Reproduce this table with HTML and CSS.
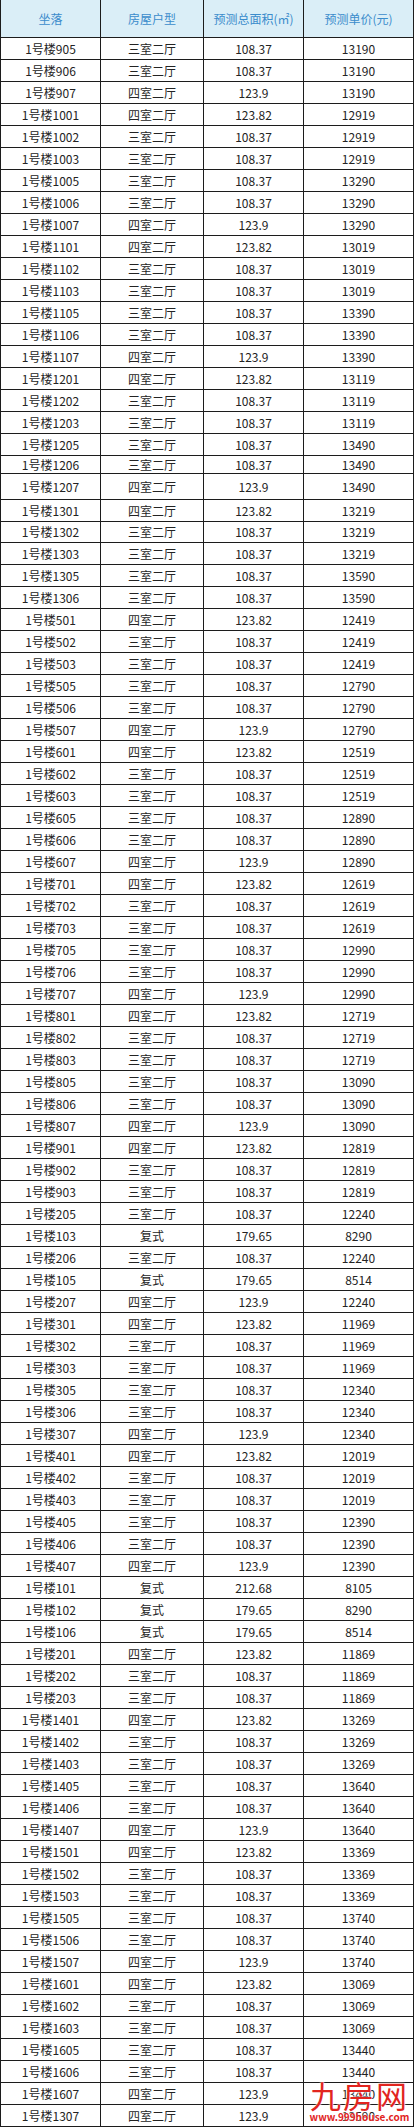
FILE: index.html
```html
<!DOCTYPE html>
<html lang="zh-CN">
<head>
<meta charset="utf-8">
<title>预测单价表</title>
<link rel="stylesheet" href="styles.css">
</head>
<body>
<div class="sheet">
  <div class="row head"><div class="cell c1">坐落</div><div class="cell c2">房屋户型</div><div class="cell c3">预测总面积(㎡)</div><div class="cell c4">预测单价(元)</div></div>
  <div class="row"><div class="cell c1">1号楼905</div><div class="cell c2">三室二厅</div><div class="cell c3">108.37</div><div class="cell c4">13190</div></div>
  <div class="row"><div class="cell c1">1号楼906</div><div class="cell c2">三室二厅</div><div class="cell c3">108.37</div><div class="cell c4">13190</div></div>
  <div class="row"><div class="cell c1">1号楼907</div><div class="cell c2">四室二厅</div><div class="cell c3">123.9</div><div class="cell c4">13190</div></div>
  <div class="row"><div class="cell c1">1号楼1001</div><div class="cell c2">四室二厅</div><div class="cell c3">123.82</div><div class="cell c4">12919</div></div>
  <div class="row"><div class="cell c1">1号楼1002</div><div class="cell c2">三室二厅</div><div class="cell c3">108.37</div><div class="cell c4">12919</div></div>
  <div class="row"><div class="cell c1">1号楼1003</div><div class="cell c2">三室二厅</div><div class="cell c3">108.37</div><div class="cell c4">12919</div></div>
  <div class="row"><div class="cell c1">1号楼1005</div><div class="cell c2">三室二厅</div><div class="cell c3">108.37</div><div class="cell c4">13290</div></div>
  <div class="row"><div class="cell c1">1号楼1006</div><div class="cell c2">三室二厅</div><div class="cell c3">108.37</div><div class="cell c4">13290</div></div>
  <div class="row"><div class="cell c1">1号楼1007</div><div class="cell c2">四室二厅</div><div class="cell c3">123.9</div><div class="cell c4">13290</div></div>
  <div class="row"><div class="cell c1">1号楼1101</div><div class="cell c2">四室二厅</div><div class="cell c3">123.82</div><div class="cell c4">13019</div></div>
  <div class="row"><div class="cell c1">1号楼1102</div><div class="cell c2">三室二厅</div><div class="cell c3">108.37</div><div class="cell c4">13019</div></div>
  <div class="row"><div class="cell c1">1号楼1103</div><div class="cell c2">三室二厅</div><div class="cell c3">108.37</div><div class="cell c4">13019</div></div>
  <div class="row"><div class="cell c1">1号楼1105</div><div class="cell c2">三室二厅</div><div class="cell c3">108.37</div><div class="cell c4">13390</div></div>
  <div class="row"><div class="cell c1">1号楼1106</div><div class="cell c2">三室二厅</div><div class="cell c3">108.37</div><div class="cell c4">13390</div></div>
  <div class="row"><div class="cell c1">1号楼1107</div><div class="cell c2">四室二厅</div><div class="cell c3">123.9</div><div class="cell c4">13390</div></div>
  <div class="row"><div class="cell c1">1号楼1201</div><div class="cell c2">四室二厅</div><div class="cell c3">123.82</div><div class="cell c4">13119</div></div>
  <div class="row"><div class="cell c1">1号楼1202</div><div class="cell c2">三室二厅</div><div class="cell c3">108.37</div><div class="cell c4">13119</div></div>
  <div class="row"><div class="cell c1">1号楼1203</div><div class="cell c2">三室二厅</div><div class="cell c3">108.37</div><div class="cell c4">13119</div></div>
  <div class="row"><div class="cell c1">1号楼1205</div><div class="cell c2">三室二厅</div><div class="cell c3">108.37</div><div class="cell c4">13490</div></div>
  <div class="row short"><div class="cell c1">1号楼1206</div><div class="cell c2">三室二厅</div><div class="cell c3">108.37</div><div class="cell c4">13490</div></div>
  <div class="row tall"><div class="cell c1">1号楼1207</div><div class="cell c2">四室二厅</div><div class="cell c3">123.9</div><div class="cell c4">13490</div></div>
  <div class="row"><div class="cell c1">1号楼1301</div><div class="cell c2">四室二厅</div><div class="cell c3">123.82</div><div class="cell c4">13219</div></div>
  <div class="row snug"><div class="cell c1">1号楼1302</div><div class="cell c2">三室二厅</div><div class="cell c3">108.37</div><div class="cell c4">13219</div></div>
  <div class="row"><div class="cell c1">1号楼1303</div><div class="cell c2">三室二厅</div><div class="cell c3">108.37</div><div class="cell c4">13219</div></div>
  <div class="row"><div class="cell c1">1号楼1305</div><div class="cell c2">三室二厅</div><div class="cell c3">108.37</div><div class="cell c4">13590</div></div>
  <div class="row"><div class="cell c1">1号楼1306</div><div class="cell c2">三室二厅</div><div class="cell c3">108.37</div><div class="cell c4">13590</div></div>
  <div class="row"><div class="cell c1">1号楼501</div><div class="cell c2">四室二厅</div><div class="cell c3">123.82</div><div class="cell c4">12419</div></div>
  <div class="row"><div class="cell c1">1号楼502</div><div class="cell c2">三室二厅</div><div class="cell c3">108.37</div><div class="cell c4">12419</div></div>
  <div class="row"><div class="cell c1">1号楼503</div><div class="cell c2">三室二厅</div><div class="cell c3">108.37</div><div class="cell c4">12419</div></div>
  <div class="row"><div class="cell c1">1号楼505</div><div class="cell c2">三室二厅</div><div class="cell c3">108.37</div><div class="cell c4">12790</div></div>
  <div class="row"><div class="cell c1">1号楼506</div><div class="cell c2">三室二厅</div><div class="cell c3">108.37</div><div class="cell c4">12790</div></div>
  <div class="row"><div class="cell c1">1号楼507</div><div class="cell c2">四室二厅</div><div class="cell c3">123.9</div><div class="cell c4">12790</div></div>
  <div class="row"><div class="cell c1">1号楼601</div><div class="cell c2">四室二厅</div><div class="cell c3">123.82</div><div class="cell c4">12519</div></div>
  <div class="row"><div class="cell c1">1号楼602</div><div class="cell c2">三室二厅</div><div class="cell c3">108.37</div><div class="cell c4">12519</div></div>
  <div class="row"><div class="cell c1">1号楼603</div><div class="cell c2">三室二厅</div><div class="cell c3">108.37</div><div class="cell c4">12519</div></div>
  <div class="row"><div class="cell c1">1号楼605</div><div class="cell c2">三室二厅</div><div class="cell c3">108.37</div><div class="cell c4">12890</div></div>
  <div class="row"><div class="cell c1">1号楼606</div><div class="cell c2">三室二厅</div><div class="cell c3">108.37</div><div class="cell c4">12890</div></div>
  <div class="row"><div class="cell c1">1号楼607</div><div class="cell c2">四室二厅</div><div class="cell c3">123.9</div><div class="cell c4">12890</div></div>
  <div class="row"><div class="cell c1">1号楼701</div><div class="cell c2">四室二厅</div><div class="cell c3">123.82</div><div class="cell c4">12619</div></div>
  <div class="row"><div class="cell c1">1号楼702</div><div class="cell c2">三室二厅</div><div class="cell c3">108.37</div><div class="cell c4">12619</div></div>
  <div class="row"><div class="cell c1">1号楼703</div><div class="cell c2">三室二厅</div><div class="cell c3">108.37</div><div class="cell c4">12619</div></div>
  <div class="row"><div class="cell c1">1号楼705</div><div class="cell c2">三室二厅</div><div class="cell c3">108.37</div><div class="cell c4">12990</div></div>
  <div class="row"><div class="cell c1">1号楼706</div><div class="cell c2">三室二厅</div><div class="cell c3">108.37</div><div class="cell c4">12990</div></div>
  <div class="row"><div class="cell c1">1号楼707</div><div class="cell c2">四室二厅</div><div class="cell c3">123.9</div><div class="cell c4">12990</div></div>
  <div class="row"><div class="cell c1">1号楼801</div><div class="cell c2">四室二厅</div><div class="cell c3">123.82</div><div class="cell c4">12719</div></div>
  <div class="row"><div class="cell c1">1号楼802</div><div class="cell c2">三室二厅</div><div class="cell c3">108.37</div><div class="cell c4">12719</div></div>
  <div class="row"><div class="cell c1">1号楼803</div><div class="cell c2">三室二厅</div><div class="cell c3">108.37</div><div class="cell c4">12719</div></div>
  <div class="row"><div class="cell c1">1号楼805</div><div class="cell c2">三室二厅</div><div class="cell c3">108.37</div><div class="cell c4">13090</div></div>
  <div class="row"><div class="cell c1">1号楼806</div><div class="cell c2">三室二厅</div><div class="cell c3">108.37</div><div class="cell c4">13090</div></div>
  <div class="row"><div class="cell c1">1号楼807</div><div class="cell c2">四室二厅</div><div class="cell c3">123.9</div><div class="cell c4">13090</div></div>
  <div class="row"><div class="cell c1">1号楼901</div><div class="cell c2">四室二厅</div><div class="cell c3">123.82</div><div class="cell c4">12819</div></div>
  <div class="row"><div class="cell c1">1号楼902</div><div class="cell c2">三室二厅</div><div class="cell c3">108.37</div><div class="cell c4">12819</div></div>
  <div class="row"><div class="cell c1">1号楼903</div><div class="cell c2">三室二厅</div><div class="cell c3">108.37</div><div class="cell c4">12819</div></div>
  <div class="row"><div class="cell c1">1号楼205</div><div class="cell c2">三室二厅</div><div class="cell c3">108.37</div><div class="cell c4">12240</div></div>
  <div class="row"><div class="cell c1">1号楼103</div><div class="cell c2">复式</div><div class="cell c3">179.65</div><div class="cell c4">8290</div></div>
  <div class="row"><div class="cell c1">1号楼206</div><div class="cell c2">三室二厅</div><div class="cell c3">108.37</div><div class="cell c4">12240</div></div>
  <div class="row"><div class="cell c1">1号楼105</div><div class="cell c2">复式</div><div class="cell c3">179.65</div><div class="cell c4">8514</div></div>
  <div class="row"><div class="cell c1">1号楼207</div><div class="cell c2">四室二厅</div><div class="cell c3">123.9</div><div class="cell c4">12240</div></div>
  <div class="row"><div class="cell c1">1号楼301</div><div class="cell c2">四室二厅</div><div class="cell c3">123.82</div><div class="cell c4">11969</div></div>
  <div class="row"><div class="cell c1">1号楼302</div><div class="cell c2">三室二厅</div><div class="cell c3">108.37</div><div class="cell c4">11969</div></div>
  <div class="row"><div class="cell c1">1号楼303</div><div class="cell c2">三室二厅</div><div class="cell c3">108.37</div><div class="cell c4">11969</div></div>
  <div class="row"><div class="cell c1">1号楼305</div><div class="cell c2">三室二厅</div><div class="cell c3">108.37</div><div class="cell c4">12340</div></div>
  <div class="row"><div class="cell c1">1号楼306</div><div class="cell c2">三室二厅</div><div class="cell c3">108.37</div><div class="cell c4">12340</div></div>
  <div class="row"><div class="cell c1">1号楼307</div><div class="cell c2">四室二厅</div><div class="cell c3">123.9</div><div class="cell c4">12340</div></div>
  <div class="row"><div class="cell c1">1号楼401</div><div class="cell c2">四室二厅</div><div class="cell c3">123.82</div><div class="cell c4">12019</div></div>
  <div class="row"><div class="cell c1">1号楼402</div><div class="cell c2">三室二厅</div><div class="cell c3">108.37</div><div class="cell c4">12019</div></div>
  <div class="row"><div class="cell c1">1号楼403</div><div class="cell c2">三室二厅</div><div class="cell c3">108.37</div><div class="cell c4">12019</div></div>
  <div class="row"><div class="cell c1">1号楼405</div><div class="cell c2">三室二厅</div><div class="cell c3">108.37</div><div class="cell c4">12390</div></div>
  <div class="row"><div class="cell c1">1号楼406</div><div class="cell c2">三室二厅</div><div class="cell c3">108.37</div><div class="cell c4">12390</div></div>
  <div class="row"><div class="cell c1">1号楼407</div><div class="cell c2">四室二厅</div><div class="cell c3">123.9</div><div class="cell c4">12390</div></div>
  <div class="row"><div class="cell c1">1号楼101</div><div class="cell c2">复式</div><div class="cell c3">212.68</div><div class="cell c4">8105</div></div>
  <div class="row"><div class="cell c1">1号楼102</div><div class="cell c2">复式</div><div class="cell c3">179.65</div><div class="cell c4">8290</div></div>
  <div class="row"><div class="cell c1">1号楼106</div><div class="cell c2">复式</div><div class="cell c3">179.65</div><div class="cell c4">8514</div></div>
  <div class="row"><div class="cell c1">1号楼201</div><div class="cell c2">四室二厅</div><div class="cell c3">123.82</div><div class="cell c4">11869</div></div>
  <div class="row"><div class="cell c1">1号楼202</div><div class="cell c2">三室二厅</div><div class="cell c3">108.37</div><div class="cell c4">11869</div></div>
  <div class="row"><div class="cell c1">1号楼203</div><div class="cell c2">三室二厅</div><div class="cell c3">108.37</div><div class="cell c4">11869</div></div>
  <div class="row"><div class="cell c1">1号楼1401</div><div class="cell c2">四室二厅</div><div class="cell c3">123.82</div><div class="cell c4">13269</div></div>
  <div class="row"><div class="cell c1">1号楼1402</div><div class="cell c2">三室二厅</div><div class="cell c3">108.37</div><div class="cell c4">13269</div></div>
  <div class="row"><div class="cell c1">1号楼1403</div><div class="cell c2">三室二厅</div><div class="cell c3">108.37</div><div class="cell c4">13269</div></div>
  <div class="row"><div class="cell c1">1号楼1405</div><div class="cell c2">三室二厅</div><div class="cell c3">108.37</div><div class="cell c4">13640</div></div>
  <div class="row"><div class="cell c1">1号楼1406</div><div class="cell c2">三室二厅</div><div class="cell c3">108.37</div><div class="cell c4">13640</div></div>
  <div class="row"><div class="cell c1">1号楼1407</div><div class="cell c2">四室二厅</div><div class="cell c3">123.9</div><div class="cell c4">13640</div></div>
  <div class="row"><div class="cell c1">1号楼1501</div><div class="cell c2">四室二厅</div><div class="cell c3">123.82</div><div class="cell c4">13369</div></div>
  <div class="row"><div class="cell c1">1号楼1502</div><div class="cell c2">三室二厅</div><div class="cell c3">108.37</div><div class="cell c4">13369</div></div>
  <div class="row"><div class="cell c1">1号楼1503</div><div class="cell c2">三室二厅</div><div class="cell c3">108.37</div><div class="cell c4">13369</div></div>
  <div class="row"><div class="cell c1">1号楼1505</div><div class="cell c2">三室二厅</div><div class="cell c3">108.37</div><div class="cell c4">13740</div></div>
  <div class="row"><div class="cell c1">1号楼1506</div><div class="cell c2">三室二厅</div><div class="cell c3">108.37</div><div class="cell c4">13740</div></div>
  <div class="row"><div class="cell c1">1号楼1507</div><div class="cell c2">四室二厅</div><div class="cell c3">123.9</div><div class="cell c4">13740</div></div>
  <div class="row"><div class="cell c1">1号楼1601</div><div class="cell c2">四室二厅</div><div class="cell c3">123.82</div><div class="cell c4">13069</div></div>
  <div class="row"><div class="cell c1">1号楼1602</div><div class="cell c2">三室二厅</div><div class="cell c3">108.37</div><div class="cell c4">13069</div></div>
  <div class="row"><div class="cell c1">1号楼1603</div><div class="cell c2">三室二厅</div><div class="cell c3">108.37</div><div class="cell c4">13069</div></div>
  <div class="row"><div class="cell c1">1号楼1605</div><div class="cell c2">三室二厅</div><div class="cell c3">108.37</div><div class="cell c4">13440</div></div>
  <div class="row"><div class="cell c1">1号楼1606</div><div class="cell c2">三室二厅</div><div class="cell c3">108.37</div><div class="cell c4">13440</div></div>
  <div class="row"><div class="cell c1">1号楼1607</div><div class="cell c2">四室二厅</div><div class="cell c3">123.9</div><div class="cell c4">13440</div></div>
  <div class="row"><div class="cell c1">1号楼1307</div><div class="cell c2">四室二厅</div><div class="cell c3">123.9</div><div class="cell c4">13590</div></div>
  <div class="watermark">
    <div class="wm-logo">九房网</div>
    <div class="wm-url">www.999house.com</div>
  </div>
</div>
</body>
</html>
```
FILE: styles.css
```css
* { box-sizing: border-box; }
body {
  margin: 0;
  background: #ffffff;
  font-family: "Noto Sans CJK SC", "Noto Sans", sans-serif;
}
.sheet {
  position: relative;
  width: 414px;
}
.row {
  display: flex;
  height: 22px;
  border-bottom: 1px solid #1c1c1c;
}
.row.short { height: 18px; }
.row.tall { height: 26px; }
.row.snug { height: 21px; }
.cell {
  display: flex;
  align-items: center;
  justify-content: center;
  border-right: 1px solid #1c1c1c;
  font-size: 12px;
  line-height: 1;
  color: #232323;
  white-space: nowrap;
}
.c1 { width: 101px; border-left: 1px solid #1c1c1c; }
.c2 { width: 103px; }
.c3 { width: 100px; }
.c4 { width: 110px; }
.head {
  height: 38px;
  background: #daeef7;
}
.head .cell {
  color: #3b8ccc;
  font-size: 12px;
}
.watermark {
  position: absolute;
  left: 309px;
  top: 2078px;
  width: 101px;
  text-align: center;
  color: #e2251f;
}
.wm-logo {
  font-size: 31px;
  line-height: 33px;
  letter-spacing: 2px;
  font-weight: 400;
  text-shadow: 0 0 2px #ffffff, 0 0 2px #ffffff;
}
.wm-url {
  font-size: 10px;
  line-height: 12px;
  font-weight: 700;
  text-shadow: 0 0 2px #ffffff;
}
```
